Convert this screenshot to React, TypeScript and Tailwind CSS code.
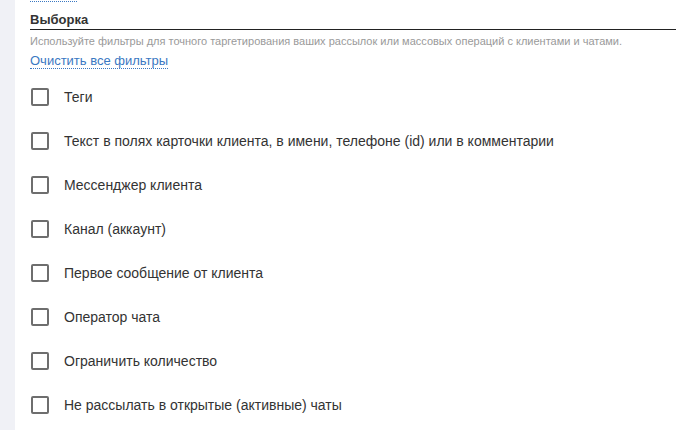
const filters = [
  "Теги",
  "Текст в полях карточки клиента, в имени, телефоне (id) или в комментарии",
  "Мессенджер клиента",
  "Канал (аккаунт)",
  "Первое сообщение от клиента",
  "Оператор чата",
  "Ограничить количество",
  "Не рассылать в открытые (активные) чаты",
];

export default function App() {
  return (
    <div className="flex h-[430px] w-[676px] overflow-hidden bg-white font-['Liberation_Sans',Arial,sans-serif]">
      <div className="w-[15px] shrink-0 bg-[#f0f1f6]" />
      <div className="flex-1 pl-[15px]">
        <div className="mt-px h-0 w-[47px] border-b border-dotted border-[#3a78c2]" />
        <div className="mt-[10px] border-b border-[#222] pb-[2px] text-[13px] font-bold leading-[15px] text-[#333]">
          Выборка
        </div>
        <p className="mt-[5px] text-[11px] leading-[13px] text-[#9a9a9a]">
          Используйте фильтры для точного таргетирования ваших рассылок или массовых операций с клиентами и чатами.
        </p>
        <a className="mt-[2px] inline-block border-b border-dotted border-[#3a78c2] text-[13px] leading-[15px] text-[#3a78c2]">
          Очистить все фильтры
        </a>
        <div className="mt-[3px] flex flex-col">
          {filters.map((f) => (
            <label key={f} className="flex h-[44px] items-center">
              <span className="ml-[1px] box-border h-[18px] w-[18px] shrink-0 rounded-[2px] border-2 border-[#6e6e6e]" />
              <span className="ml-[15px] text-[14px] text-[#333]">{f}</span>
            </label>
          ))}
        </div>
      </div>
    </div>
  );
}
